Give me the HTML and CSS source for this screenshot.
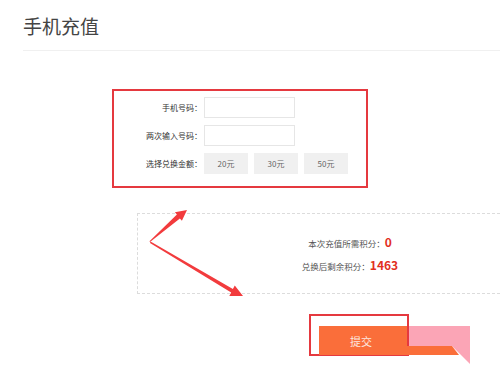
FILE: index.html
```html
<!DOCTYPE html>
<html lang="zh-CN">
<head>
    <meta charset="UTF-8">
    <meta name="viewport" content="width=device-width, initial-scale=1.0">
    <title>手机充值</title>
    <link rel="stylesheet" href="styles.css">
</head>
<body>
    <div class="page">
        <h1 class="title">手机充值</h1>

        <div class="form-box">
            <div class="form-row">
                <label class="form-label" for="phone">手机号码：</label>
                <input id="phone" class="form-input" type="text">
            </div>
            <div class="form-row">
                <label class="form-label" for="phone2">两次输入号码：</label>
                <input id="phone2" class="form-input" type="text">
            </div>
            <div class="form-row">
                <span class="form-label">选择兑换金额：</span>
                <div class="amounts">
                    <button class="amount">20元</button>
                    <button class="amount">30元</button>
                    <button class="amount">50元</button>
                </div>
            </div>
        </div>

        <div class="points">
            <p class="points-line">本次充值所需积分：<span class="num">0</span></p>
            <p class="points-line">兑换后剩余积分：<span class="num">1463</span></p>
        </div>

        <div class="submit-wrap">
            <button class="submit">提交</button>
            <!-- 按钮右侧的折角装饰 -->
            <svg class="ribbon" width="63" height="38" viewBox="0 0 63 38">
                <polygon points="2,0 63,0 63,38 45,20 2,20" fill="#fba5b6"/>
                <polygon points="0,20 45,20 52,29 0,29" fill="#fa6e3a"/>
            </svg>
        </div>

        <!-- 标注箭头 -->
        <svg class="arrows" width="500" height="366" viewBox="0 0 500 366">
            <polygon points="150,242 179.9,218.4 181.9,220.7 187,210 174.9,212.2 176.9,214.6 149.5,241.3" fill="#f23b3d"/>
            <polygon points="150,243 231.2,292.6 229.3,296 243,296 234.8,285.5 232.9,288.9 150.5,241.5" fill="#f23b3d"/>
        </svg>
    </div>
</body>
</html>
```

FILE: styles.css
```css
html {
    overflow: hidden;
}

body {
    margin: 0;
    background-color: #fff;
    font-family: "Noto Sans CJK SC", "Noto Sans", sans-serif;
    color: #333;
}

.page {
    position: relative;
    width: 500px;
    height: 366px;
}

.title {
    margin: 0 0 0 23px;
    padding: 13px 0 11px;
    font-size: 19px;
    font-weight: normal;
    line-height: 26px;
    color: #444;
    border-bottom: 1px solid #f0f0f0;
}

.form-box {
    box-sizing: border-box;
    width: 256px;
    height: 99px;
    margin: 38px 0 0 112px;
    padding: 6px 0 0 0;
    border: 2px solid #e5393f;
    display: flex;
    flex-direction: column;
    gap: 7px;
}

.form-row {
    display: flex;
    align-items: center;
    height: 21px;
}

.form-label {
    width: 88px;
    margin-right: 2px;
    text-align: right;
    font-size: 8px;
    color: #333;
}

.form-input {
    box-sizing: border-box;
    width: 91px;
    height: 21px;
    margin: 0;
    border: 1px solid #e6e6e6;
    outline: none;
}

.amounts {
    display: flex;
    gap: 6px;
}

.amount {
    width: 44px;
    height: 21px;
    padding: 0;
    border: none;
    background-color: #f0f0f0;
    font-family: inherit;
    font-size: 8px;
    color: #666;
}

.points {
    box-sizing: border-box;
    width: 363px;
    margin: 25px 0 0 137px;
    padding: 17px 0 16px 62px;
    border: 1px dashed #dcdcdc;
    border-right: none;
    text-align: center;
}

.points-line {
    margin: 0;
    line-height: 22px;
    font-size: 8.5px;
    color: #555;
}

.num {
    font-size: 12px;
    font-weight: bold;
    color: #e2301f;
}

.submit-wrap {
    position: relative;
    box-sizing: border-box;
    width: 100px;
    height: 42px;
    margin: 20px 0 0 309px;
    padding: 10px 0 0 8px;
    border: 2px solid #e5393f;
}

.submit {
    position: relative;
    display: block;
    width: 88px;
    height: 29px;
    padding: 0 4px 0 0;
    border: none;
    background-color: #fa6e3a;
    font-family: inherit;
    font-size: 11px;
    color: #fde8e0;
}

.ribbon {
    position: absolute;
    left: 96px;
    top: 10px;
}

.arrows {
    position: absolute;
    left: 0;
    top: 0;
    pointer-events: none;
}
```
